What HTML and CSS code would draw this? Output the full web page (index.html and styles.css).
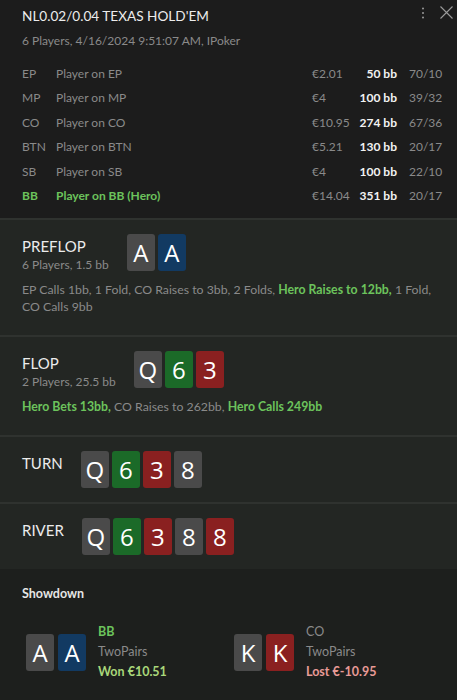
FILE: index.html
```html
<!DOCTYPE html>
<html lang="en">
<head>
    <meta charset="UTF-8">
    <meta name="viewport" content="width=device-width, initial-scale=1.0">
    <title>Hand History</title>
    <link rel="stylesheet" href="styles.css">
</head>
<body>
    <div class="panel">
        <!-- Hand header -->
        <div class="header">
            <div class="title-row">
                <h1>NL0.02/0.04 TEXAS HOLD'EM</h1>
                <div class="tools">
                    <svg class="dots" width="4" height="12" viewBox="0 0 4 12"><circle cx="2" cy="1.5" r="1" fill="#9a9a9a"/><circle cx="2" cy="6" r="1" fill="#9a9a9a"/><circle cx="2" cy="10.5" r="1" fill="#9a9a9a"/></svg>
                    <svg class="close" width="13" height="13" viewBox="0 0 13 13"><path d="M0.5 0.5L12.5 12.5M12.5 0.5L0.5 12.5" stroke="#9a9a9a" stroke-width="1.1"/></svg>
                </div>
            </div>
            <div class="subtitle">6 Players, 4/16/2024 9:51:07 AM, IPoker</div>

            <div class="players">
                <div class="player">
                    <span class="pos">EP</span><span class="name">Player on EP</span><span class="money">€2.01</span><span class="bb">50 bb</span><span class="stats">70/10</span>
                </div>
                <div class="player">
                    <span class="pos">MP</span><span class="name">Player on MP</span><span class="money">€4</span><span class="bb">100 bb</span><span class="stats">39/32</span>
                </div>
                <div class="player">
                    <span class="pos">CO</span><span class="name">Player on CO</span><span class="money">€10.95</span><span class="bb">274 bb</span><span class="stats">67/36</span>
                </div>
                <div class="player">
                    <span class="pos">BTN</span><span class="name">Player on BTN</span><span class="money">€5.21</span><span class="bb">130 bb</span><span class="stats">20/17</span>
                </div>
                <div class="player">
                    <span class="pos">SB</span><span class="name">Player on SB</span><span class="money">€4</span><span class="bb">100 bb</span><span class="stats">22/10</span>
                </div>
                <div class="player hero">
                    <span class="pos">BB</span><span class="name">Player on BB (Hero)</span><span class="money">€14.04</span><span class="bb">351 bb</span><span class="stats">20/17</span>
                </div>
            </div>
        </div>

        <!-- Streets -->
        <div class="street">
            <div class="street-top">
                <div class="street-info">
                    <div class="street-name">PREFLOP</div>
                    <div class="street-sub">6 Players, 1.5 bb</div>
                </div>
                <div class="cards">
                    <span class="card grey">A</span><span class="card blue">A</span>
                </div>
            </div>
            <p class="actions">EP Calls 1bb, 1 Fold, CO Raises to 3bb, 2 Folds, <b class="hero-act">Hero Raises to 12bb,</b> 1 Fold, CO Calls 9bb</p>
        </div>

        <div class="street">
            <div class="street-top">
                <div class="street-info">
                    <div class="street-name">FLOP</div>
                    <div class="street-sub">2 Players, 25.5 bb</div>
                </div>
                <div class="cards">
                    <span class="card grey">Q</span><span class="card green">6</span><span class="card red">3</span>
                </div>
            </div>
            <p class="actions"><b class="hero-act">Hero Bets 13bb,</b> CO Raises to 262bb, <b class="hero-act">Hero Calls 249bb</b></p>
        </div>

        <div class="street short">
            <div class="street-top">
                <div class="street-info">
                    <div class="street-name">TURN</div>
                </div>
                <div class="cards">
                    <span class="card grey">Q</span><span class="card green">6</span><span class="card red">3</span><span class="card grey">8</span>
                </div>
            </div>
        </div>

        <div class="street short">
            <div class="street-top">
                <div class="street-info">
                    <div class="street-name">RIVER</div>
                </div>
                <div class="cards">
                    <span class="card grey">Q</span><span class="card green">6</span><span class="card red">3</span><span class="card grey">8</span><span class="card red">8</span>
                </div>
            </div>
        </div>

        <!-- Showdown -->
        <div class="showdown">
            <div class="showdown-title">Showdown</div>
            <div class="hands">
                <div class="hand">
                    <div class="cards">
                        <span class="card grey">A</span><span class="card blue">A</span>
                    </div>
                    <div class="hand-info">
                        <div class="hand-pos hero-act">BB</div>
                        <div class="hand-rank">TwoPairs</div>
                        <div class="won">Won €10.51</div>
                    </div>
                </div>
                <div class="hand">
                    <div class="cards">
                        <span class="card grey">K</span><span class="card red">K</span>
                    </div>
                    <div class="hand-info">
                        <div class="hand-pos">CO</div>
                        <div class="hand-rank">TwoPairs</div>
                        <div class="lost">Lost €-10.95</div>
                    </div>
                </div>
            </div>
        </div>
    </div>
</body>
</html>
```

FILE: styles.css
```css
/* Global */
body {
    margin: 0;
    background-color: #1d1f1d;
    font-family: 'Lato', 'Open Sans', sans-serif;
    color: #e6e6e6;
}

.panel {
    width: 457px;
    min-height: 700px;
    background-color: #1d1f1d;
}

/* Header */
.header {
    background-color: #1c1c1c;
    padding: 6px 22px 10px 22px;
}

.title-row {
    display: flex;
    justify-content: space-between;
    align-items: flex-start;
}

h1 {
    margin: 0;
    font-size: 13.6px;
    font-weight: 400;
    line-height: 21px;
    color: #ececec;
}

.tools {
    display: flex;
    gap: 15px;
    margin-right: -18px;
}

.dots {
    margin-top: 1px;
}

.subtitle {
    margin-top: 5px;
    font-size: 12px;
    line-height: 18px;
    color: #8a8a8a;
}

.players {
    margin-top: 11px;
}

.player {
    display: grid;
    grid-template-columns: 34px 1fr 44px 41px 38px;
    height: 24.5px;
    align-items: center;
    font-size: 12px;
    color: #8a8a8a;
}

.player .bb {
    text-align: right;
    color: #f2f2f2;
    font-weight: 700;
}

.player .stats {
    padding-left: 12px;
}

.player.hero .pos,
.player.hero .name {
    color: #6cc35c;
    font-weight: 700;
}

/* Streets */
.street {
    background-color: #232623;
    border-top: 2px solid #2f322f;
    padding: 14px 22px 20px 22px;
}

.street.short {
    padding-bottom: 14px;
}

.street-top {
    display: flex;
    gap: 18px;
    align-items: flex-start;
}

.street-info {
    margin-top: 2px;
}

.street-name {
    font-size: 15px;
    line-height: 20px;
    color: #ececec;
}

.street-sub {
    font-size: 12px;
    line-height: 18px;
    color: #8a8a8a;
}

.actions {
    margin: 7px 0 0 0;
    font-size: 12.3px;
    line-height: 17px;
    color: #8a8a8a;
}

.hero-act {
    color: #6cc35c;
    font-weight: 700;
}

/* Cards */
.cards {
    display: flex;
    gap: 3px;
}

.card {
    width: 28px;
    height: 37px;
    border-radius: 3px;
    display: flex;
    align-items: center;
    justify-content: center;
    font-family: 'Open Sans', sans-serif;
    font-size: 24px;
    color: #ffffff;
}

.card.grey {
    background-color: #4a4a4a;
}

.card.blue {
    background-color: #123a62;
}

.card.green {
    background-color: #1b6a28;
}

.card.red {
    background-color: #8a2020;
}

/* Showdown */
.showdown {
    background-color: #1d1f1d;
    padding: 16px 22px 20px 22px;
}

.showdown-title {
    font-size: 12.5px;
    font-weight: 700;
    line-height: 18px;
    color: #e6e6e6;
}

.hands {
    display: grid;
    grid-template-columns: 208px 1fr;
    margin-top: 19px;
    padding-left: 4px;
}

.hand {
    display: flex;
    align-items: center;
    gap: 12px;
}

.hand .cards {
    gap: 4px;
}

.hand-info {
    font-size: 12.5px;
    line-height: 20px;
    color: #8a8a8a;
}

.won {
    color: #a9d77a;
    font-weight: 700;
}

.lost {
    color: #e89a96;
    font-weight: 700;
}
```
